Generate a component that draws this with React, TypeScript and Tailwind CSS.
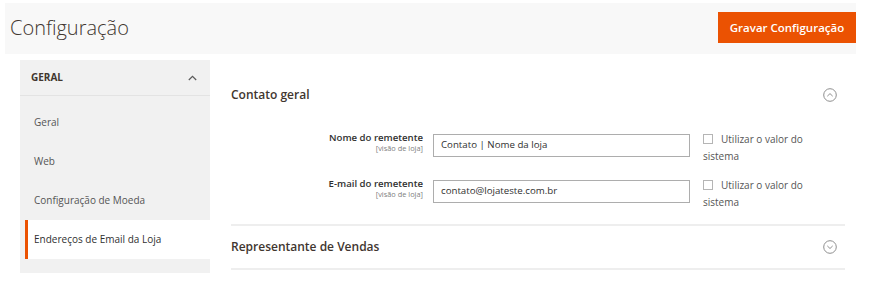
function CircleChevron({ up }: { up?: boolean }) {
  return (
    <svg width="14" height="14" viewBox="0 0 14 14" className="block">
      <circle cx="7" cy="7" r="6.3" fill="none" stroke="#8f8f8f" strokeWidth="1" />
      <path
        d={up ? 'M4.3 8.2 L7 5.6 L9.7 8.2' : 'M4.3 5.9 L7 8.5 L9.7 5.9'}
        fill="none"
        stroke="#8f8f8f"
        strokeWidth="1"
      />
    </svg>
  );
}

function FieldRow({ label, value }: { label: string; value: string }) {
  return (
    <div className="flex items-start h-[46px]">
      <div className="w-[192px] text-right">
        <div className="text-[9.6px] font-semibold leading-[13px] text-[#303030]">{label}</div>
        <div className="text-[7.4px] leading-[9px] text-[#808080]">[visão de loja]</div>
      </div>
      <div className="ml-[10px] mt-[3px] w-[257px] h-[23px] border border-[#adadad] bg-white flex items-center pl-[7px] text-[9.7px] text-[#303030]">
        {value}
      </div>
      <div className="ml-[13px] w-[112px] text-[10px] leading-[17px] text-[#555555]">
        <span className="inline-block w-[10px] h-[10px] border border-[#b5b5b5] bg-white align-[-1px] mr-[8px]" />
        Utilizar o valor do sistema
      </div>
    </div>
  );
}

export default function App() {
  const items = ['Geral', 'Web', 'Configuração de Moeda'];
  return (
    <div
      className="w-[882px] h-[287px] bg-white overflow-hidden"
      style={{ fontFamily: '"Open Sans", "Liberation Sans", sans-serif' }}
    >
      <div className="mt-[3px] ml-[5px] w-[851px] h-[51px] bg-[#f8f8f8] flex items-center justify-between pl-[5px]">
        <h1 className="text-[20px] font-light text-[#41362f] leading-none -mt-[2px]">Configuração</h1>
        <button className="h-[31px] w-[138px] bg-[#eb5202] text-white text-[11.5px] font-semibold -mt-[2px]">
          Gravar Configuração
        </button>
      </div>

      <div className="flex mt-[6px] pl-[20px]">
        <div className="w-[190px] bg-[#f1f1f1] pb-[14px]">
          <div className="h-[36px] border-b border-[#e3e3e3] flex items-center justify-between pl-[11px] pr-[13px]">
            <span className="text-[10px] font-bold text-[#41362f]">GERAL</span>
            <svg width="9" height="6" viewBox="0 0 9 6">
              <path d="M0.8 5 L4.5 1.3 L8.2 5" fill="none" stroke="#5a5a5a" strokeWidth="1.2" />
            </svg>
          </div>
          <div className="pt-[7px]">
            {items.map((t) => (
              <div key={t} className="h-[39px] flex items-center pl-[14px] text-[10px] text-[#555555]">
                {t}
              </div>
            ))}
            <div className="h-[39px] ml-[5px] bg-white border-l-[3px] border-[#eb5202] flex items-center pl-[6px] text-[10px] text-[#303030]">
              Endereços de Email da Loja
            </div>
          </div>
        </div>

        <div className="ml-[21px] w-[614px] pt-[10px]">
          <div className="h-[50px] flex items-center justify-between pr-[8px]">
            <span className="text-[12px] font-semibold text-[#41362f]">Contato geral</span>
            <CircleChevron up />
          </div>
          <div className="mt-[11px]">
            <FieldRow label="Nome do remetente" value="Contato | Nome da loja" />
            <FieldRow label="E-mail do remetente" value="contato@lojateste.com.br" />
          </div>
          <div className="mt-[1px] border-t-2 border-b-2 border-[#eeeeee] h-[46px] flex items-center justify-between pr-[8px]">
            <span className="text-[12px] font-semibold text-[#41362f]">Representante de Vendas</span>
            <CircleChevron />
          </div>
        </div>
      </div>
    </div>
  );
}
